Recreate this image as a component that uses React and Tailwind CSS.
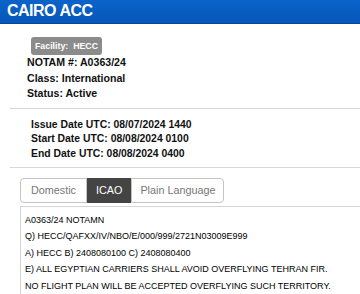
export default function App() {
  const font = { fontFamily: '"Liberation Sans", Arial, sans-serif' };
  return (
    <div className="w-[360px] h-[294px] overflow-hidden bg-white" style={font}>
      <div className="h-[24px] border-b border-[#0a4593] bg-gradient-to-b from-[#0b63ca] to-[#0657b9] px-[7px] flex items-center">
        <span className="text-white text-[16px] font-bold tracking-[-0.5px] leading-none pb-[1px]">CAIRO ACC</span>
      </div>
      <div className="pt-[13px]">
        <div className="ml-[31px] flex w-fit h-[18px] items-center rounded-[3px] bg-[#8b8b8b] px-[4px] text-white text-[8.8px] font-bold leading-none">
          Facility:&nbsp; HECC
        </div>
        <div className="pl-[27px] text-[10.6px] font-bold leading-[15.5px] text-[#111]">
          <div>NOTAM #: A0363/24</div>
          <div>Class: International</div>
          <div>Status: Active</div>
        </div>
      </div>
      <div className="ml-[10px] mt-[6px] h-px bg-[#d8d8d8]" />
      <div className="pl-[31px] pt-[9px] pb-[5px] text-[10.4px] font-bold leading-[14.7px] text-[#111]">
        <div>Issue Date UTC: 08/07/2024 1440</div>
        <div>Start Date UTC: 08/08/2024 0100</div>
        <div>End Date UTC: 08/08/2024 0400</div>
      </div>
      <div className="ml-[10px] h-px bg-[#d8d8d8]" />
      <div className="ml-[20px] mt-[10px] flex h-[25px] text-[10.8px] leading-none">
        <div className="flex items-center rounded-l-[4px] border border-[#c4c4c4] px-[10px] text-[#777]">Domestic</div>
        <div className="flex items-center border-y border-[#444] bg-[#444] px-[9px] text-white">ICAO</div>
        <div className="flex items-center rounded-r-[4px] border border-[#c4c4c4] px-[8px] text-[#777]">Plain Language</div>
      </div>
      <div className="ml-[20px] mt-[3px] w-[360px] border border-[#d4d4d4] pl-[4px] pt-[5px] text-[9px] leading-[16.5px] text-black">
        <div>A0363/24 NOTAMN</div>
        <div>Q) HECC/QAFXX/IV/NBO/E/000/999/2721N03009E999</div>
        <div>A) HECC B) 2408080100 C) 2408080400</div>
        <div>E) ALL EGYPTIAN CARRIERS SHALL AVOID OVERFLYING TEHRAN FIR.</div>
        <div>NO FLIGHT PLAN WILL BE ACCEPTED OVERFLYING SUCH TERRITORY.</div>
      </div>
    </div>
  );
}
